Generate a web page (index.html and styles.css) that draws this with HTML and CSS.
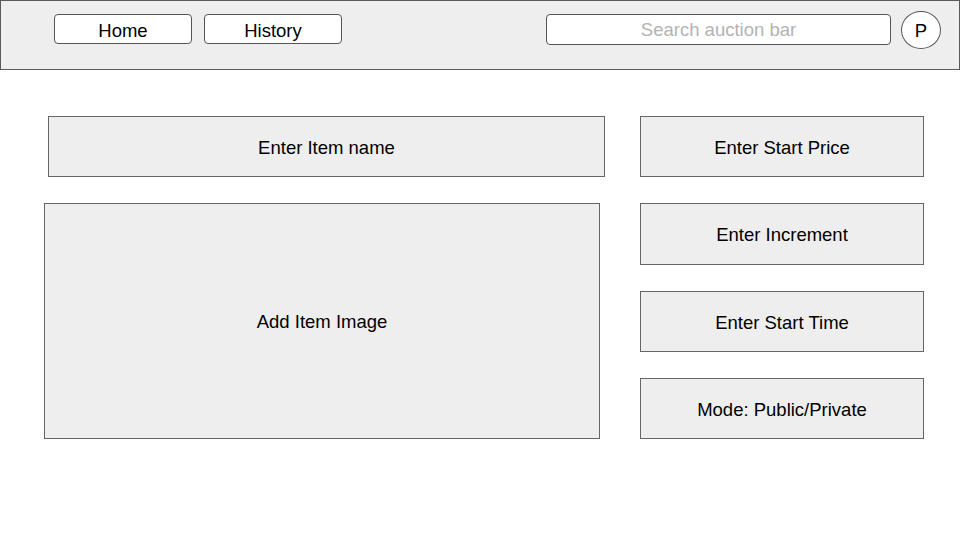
FILE: index.html
```html
<!DOCTYPE html>
<html>
<head>
<meta charset="utf-8">
<link rel="stylesheet" href="styles.css">
</head>
<body>
<header class="topbar">
  <nav class="nav">
    <button class="nav-btn">Home</button>
    <button class="nav-btn">History</button>
  </nav>
  <div class="search">Search auction bar</div>
  <div class="avatar">P</div>
</header>
<main class="content">
  <section class="left">
    <div class="box item-name">Enter Item name</div>
    <div class="box item-image">Add Item Image</div>
  </section>
  <section class="right">
    <div class="box field">Enter Start Price</div>
    <div class="box field tall">Enter Increment</div>
    <div class="box field">Enter Start Time</div>
    <div class="box field">Mode: Public/Private</div>
  </section>
</main>
</body>
</html>
```
FILE: styles.css
```css
* { box-sizing: border-box; }
html, body {
  margin: 0;
  padding: 0;
  background: #ffffff;
  font-family: "Liberation Sans", Arial, sans-serif;
  color: #000;
}
.topbar {
  height: 70px;
  width: 960px;
  background: #eeeeee;
  border: 1px solid #5a5a5a;
  display: flex;
  align-items: flex-start;
  padding-left: 53px;
}
.nav {
  display: flex;
  gap: 12px;
  margin-top: 13px;
}
.nav-btn {
  width: 138px;
  height: 30px;
  background: #fff;
  border: 1px solid #555;
  border-radius: 4px;
  font-family: "Liberation Sans", Arial, sans-serif;
  font-size: 18.5px;
  color: #000;
  padding: 2px 0 0;
  line-height: 28px;
}
.search {
  margin-left: 204px;
  margin-top: 13px;
  width: 345px;
  height: 31px;
  background: #fff;
  border: 1px solid #555;
  border-radius: 4px;
  text-align: center;
  line-height: 30px;
  font-size: 18.5px;
  color: #b3b3b3;
}
.avatar {
  margin-left: 10px;
  margin-top: 10px;
  width: 40px;
  height: 38px;
  border-radius: 50%;
  border: 1px solid #555;
  background: #fff;
  text-align: center;
  line-height: 37px;
  font-size: 18.5px;
}
.content {
  display: flex;
  padding: 46px 0 0 44px;
  gap: 35px;
}
.left {
  display: flex;
  flex-direction: column;
  gap: 26px;
}
.right {
  display: flex;
  flex-direction: column;
  gap: 26px;
}
.box {
  background: #eeeeee;
  border: 1px solid #666;
  display: flex;
  align-items: center;
  justify-content: center;
  font-size: 18.5px;
  padding-top: 2px;
}
.item-name {
  margin-left: 4px;
  width: 557px;
  height: 61px;
}
.item-image {
  width: 556px;
  height: 236px;
}
.field {
  width: 284px;
  height: 61px;
}
.field.tall { height: 62px; }
```
